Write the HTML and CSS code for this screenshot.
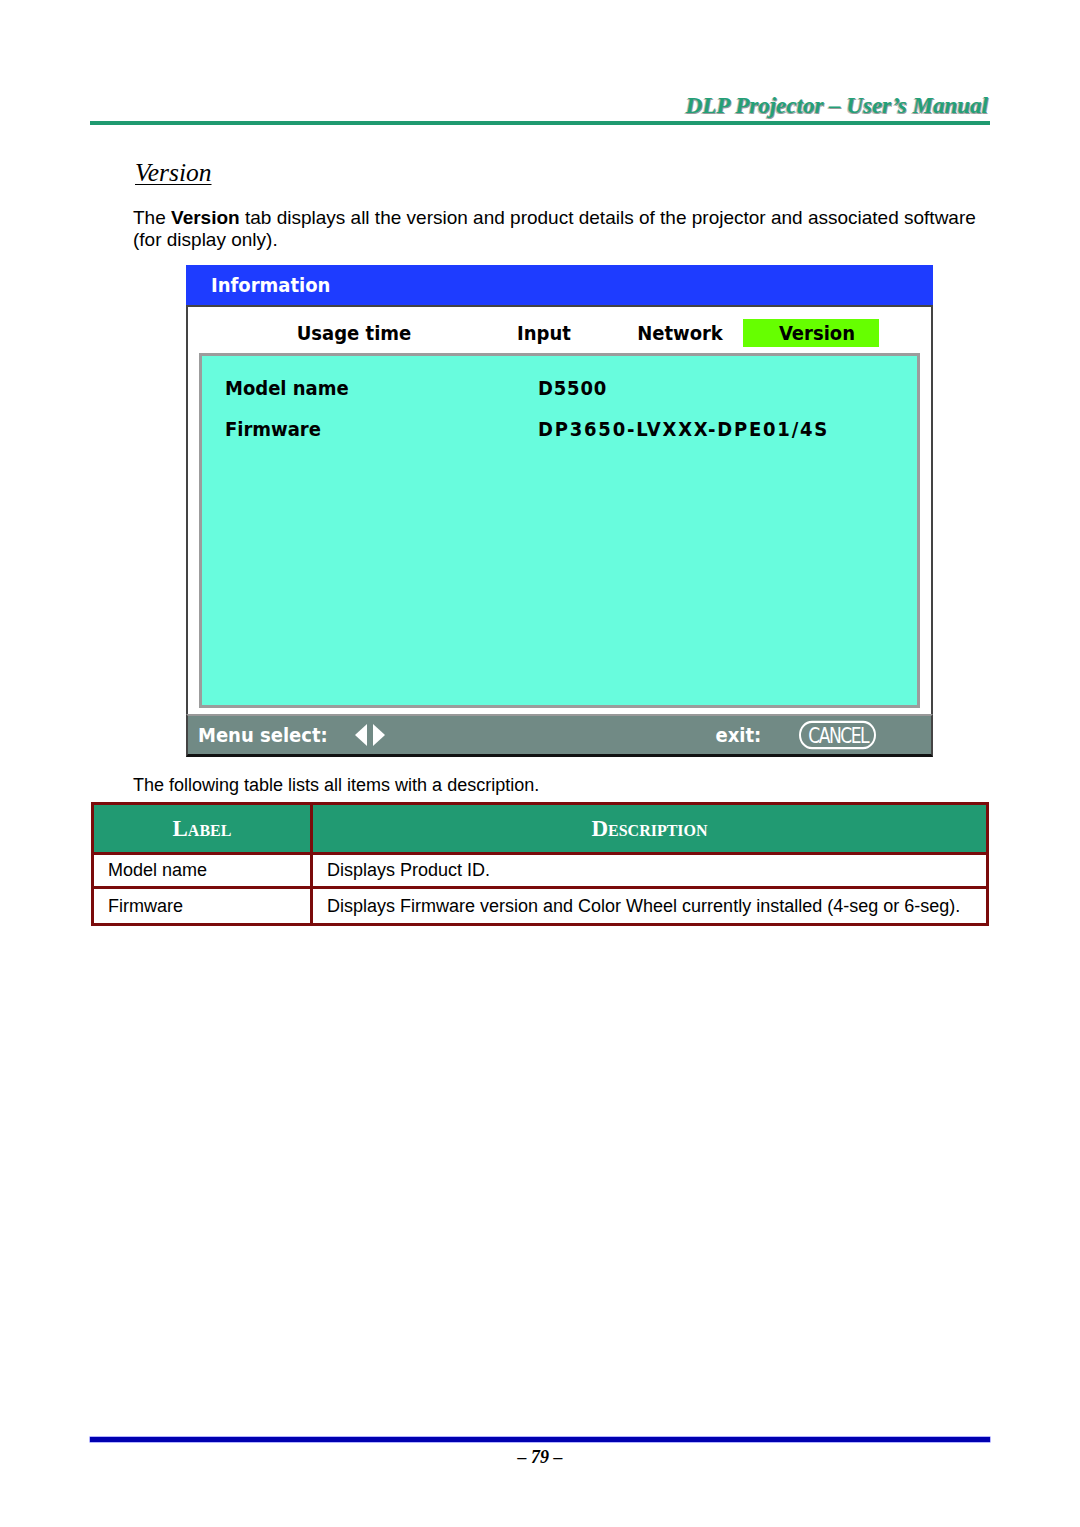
FILE: index.html
```html
<!DOCTYPE html>
<html>
<head>
<meta charset="utf-8">
<link rel="stylesheet" href="styles.css">
</head>
<body>
<div class="page">
  <header class="doc-header">
    <div class="doc-title">DLP Projector – User’s Manual</div>
    <div class="doc-rule"></div>
  </header>

  <main class="content">
    <h2 class="section-title">Version</h2>
    <p class="intro">The <b>Version</b> tab displays all the version and product details of the projector and associated software (for display only).</p>

    <div class="osd">
      <div class="osd-title">Information</div>
      <div class="osd-body">
        <div class="osd-tabs">
          <span class="tab">Usage time</span>
          <span class="tab">Input</span>
          <span class="tab-spacer"></span>
          <span class="tab">Network</span>
          <span class="tab tab-active">Version</span>
        </div>
        <div class="osd-panel">
          <div class="osd-row"><span class="osd-label">Model name</span><span class="osd-value val-model">D5500</span></div>
          <div class="osd-row"><span class="osd-label">Firmware</span><span class="osd-value val-fw">DP3650-LVXXX-DPE01/4S</span></div>
        </div>
      </div>
      <div class="osd-footer">
        <span class="foot-label">Menu select:</span>
        <svg class="arrows" width="32" height="24" viewBox="0 0 32 24">
          <polygon points="13,1 13,23 1,12" fill="#fff"/>
          <polygon points="19,1 19,23 31,12" fill="#fff"/>
        </svg>
        <span class="foot-spacer"></span>
        <span class="foot-label">exit:</span>
        <span class="cancel">CANCEL</span>
      </div>
    </div>

    <p class="lead">The following table lists all items with a description.</p>

    <table class="desc-table">
      <thead>
        <tr><th class="col-label">Label</th><th>Description</th></tr>
      </thead>
      <tbody>
        <tr class="row-a"><td>Model name</td><td>Displays Product ID.</td></tr>
        <tr class="row-b"><td>Firmware</td><td>Displays Firmware version and Color Wheel currently installed (4-seg or 6-seg).</td></tr>
      </tbody>
    </table>
  </main>

  <footer class="doc-footer">
    <div class="foot-rule"></div>
    <div class="page-num">– 79 –</div>
  </footer>
</div>
</body>
</html>
```

FILE: styles.css
```css
html, body {
  margin: 0;
  padding: 0;
  background: #fff;
}

.page {
  width: 1080px;
  height: 1527px;
  position: relative;
  box-sizing: border-box;
  padding: 93px 90px 0 90px;
  display: flex;
  flex-direction: column;
  font-family: "Liberation Sans", Arial, sans-serif;
  color: #000;
}

.doc-header {
  display: flex;
  flex-direction: column;
}

.doc-title {
  text-align: right;
  font-family: "Liberation Serif", "Times New Roman", serif;
  font-weight: bold;
  font-style: italic;
  font-size: 23px;
  line-height: 26px;
  color: #23a077;
  text-shadow: 1px 1px 0 #9a9a9a, -1px 1px 0 #c0c0c0;
  padding-right: 2px;
}

.doc-rule {
  margin-top: 2px;
  height: 4px;
  background: #1f9a70;
}

.content {
  display: flex;
  flex-direction: column;
  flex: 1;
}

.section-title {
  margin: 34px 0 0 45px;
  font-family: "Liberation Serif", "Times New Roman", serif;
  font-weight: normal;
  font-style: italic;
  font-size: 25.5px;
  line-height: 28px;
  text-decoration: underline;
  text-decoration-thickness: 1px;
  text-underline-offset: 3px;
}

.intro {
  margin: 20px 0 0 43px;
  font-size: 19px;
  line-height: 22px;
}

/* ---------- OSD ---------- */
.osd {
  margin: 14px 0 0 96px;
  width: 747px;
  display: flex;
  flex-direction: column;
  font-family: "DejaVu Sans Condensed", "DejaVu Sans", sans-serif;
  font-weight: bold;
}

.osd-title {
  height: 40px;
  background: #1e3cff;
  color: #fff;
  font-size: 20px;
  line-height: 41px;
  padding-left: 25px;
  border-bottom: 2px solid #444;
}

.osd-body {
  background: #fff;
  border-left: 2px solid #444;
  border-right: 2px solid #444;
  padding: 12px 11px 6px 11px;
}

.osd-tabs {
  display: grid;
  grid-template-columns: 310px 70px 38px 126px 136px;
  height: 27px;
  align-items: stretch;
  font-size: 20px;
}

.tab {
  text-align: center;
  line-height: 28px;
}

.tab-active {
  background: #66ff00;
  padding-left: 12px;
}

.osd-panel {
  margin-top: 7px;
  box-sizing: border-box;
  height: 355px;
  background: #68fcdd;
  border: 3px solid #9c9c9c;
  padding: 18px 0 0 23px;
  display: flex;
  flex-direction: column;
  gap: 13px;
  font-size: 20px;
}

.osd-row {
  display: flex;
  line-height: 28px;
}

.osd-label {
  width: 313px;
}

.val-model {
  letter-spacing: 0.8px;
}

.val-fw {
  letter-spacing: 1.8px;
}

.osd-footer {
  height: 38px;
  background: #718a85;
  border-top: 2px solid #999;
  border-left: 2px solid #444;
  border-right: 2px solid #444;
  border-bottom: 3px solid #111;
  display: flex;
  align-items: center;
  padding-left: 10px;
  color: #fff;
  font-size: 20px;
}

.arrows {
  margin-left: 26px;
}

.foot-spacer {
  flex: 1;
}

.cancel {
  margin: 0 55px 0 38px;
  border: 2px solid #fff;
  border-radius: 13px;
  padding: 0 6px 0 7px;
  height: 22px;
  line-height: 22px;
  font-size: 19px;
  font-weight: normal;
  letter-spacing: -1.5px;
  transform: scaleY(1.1);
}

.lead {
  margin: 17px 0 0 43px;
  font-size: 18px;
  line-height: 22px;
}

/* ---------- table ---------- */
.desc-table {
  margin: 6px 0 0 1px;
  width: 898px;
  border-collapse: collapse;
  border: 3px solid #7a0b0b;
  font-size: 18px;
}

.desc-table th,
.desc-table td {
  border: 3px solid #7a0b0b;
}

.desc-table th {
  background: #219a72;
  color: #fff;
  height: 45px;
  font-family: "Liberation Serif", "Times New Roman", serif;
  font-weight: bold;
  font-variant: small-caps;
  font-size: 23px;
  text-align: center;
}

.desc-table .col-label {
  width: 214px;
}

.desc-table td {
  padding: 0 0 0 14px;
}

.row-a td { height: 31px; }
.row-b td { height: 34px; }

/* ---------- footer ---------- */
.doc-footer {
  position: absolute;
  left: 90px;
  right: 90px;
  top: 1437px;
  display: flex;
  flex-direction: column;
  align-items: center;
}

.foot-rule {
  align-self: stretch;
  height: 5px;
  background: #0000b0;
  box-shadow: 0 0 0 0.5px #6a6aff;
}

.page-num {
  margin-top: 5px;
  font-family: "Liberation Serif", "Times New Roman", serif;
  font-weight: bold;
  font-style: italic;
  font-size: 18px;
  line-height: 20px;
}
```
